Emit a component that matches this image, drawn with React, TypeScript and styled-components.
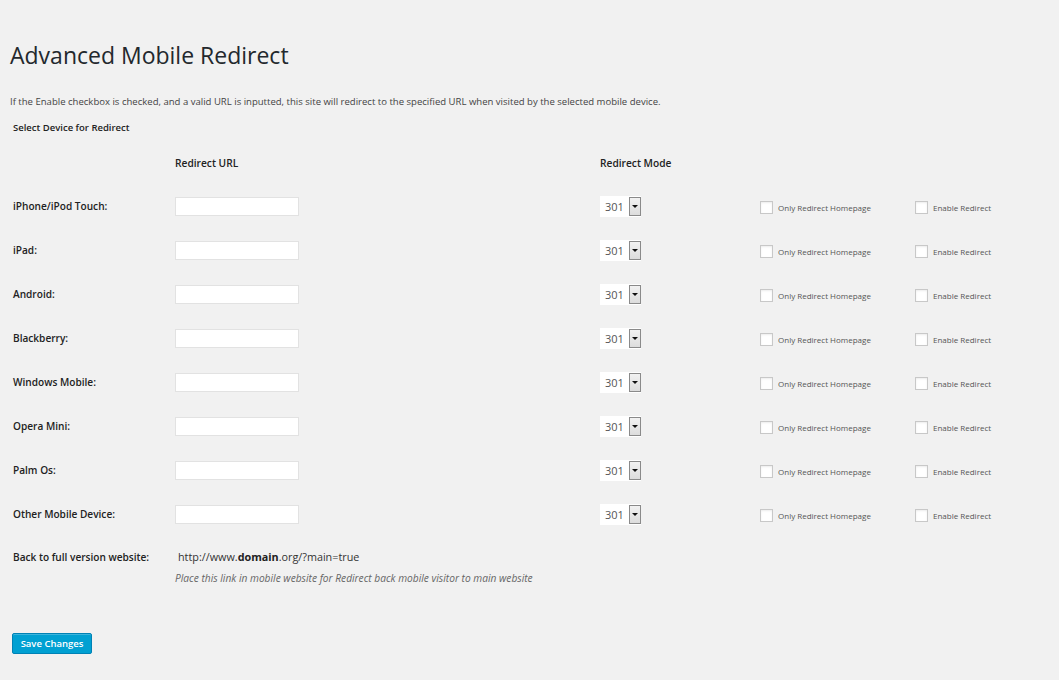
import React from "react";
import styled, { createGlobalStyle } from "styled-components";

const Global = createGlobalStyle`
  html, body { margin: 0; padding: 0; background: #f1f1f1; }
  body { font-family: "Open Sans", "Noto Sans", sans-serif; color: #444; }
`;

const Page = styled.div`
  width: 1059px;
  min-height: 680px;
  box-sizing: border-box;
  padding: 40px 10px 0 10px;
`;

const Title = styled.h1`
  margin: 0;
  font-size: 23px;
  font-weight: 400;
  line-height: 30px;
  color: #23282d;
`;

const Desc = styled.p`
  margin: 24px 0 0 0;
  font-size: 9.55px;
  line-height: 16px;
  color: #444;
`;

const Section = styled.div`
  margin: 10px 0 0 3px;
  font-size: 9.5px;
  font-weight: 600;
  line-height: 16px;
  color: #222;
`;

const Grid = styled.div`
  margin-top: 6px;
  margin-left: 3px;
  display: grid;
  grid-template-columns: 162px 425px 160px 155px auto;
  grid-template-rows: 42px;
  grid-auto-rows: 44px;
  align-items: center;
`;

const HeadCell = styled.div<{ $col: number }>`
  grid-column: ${(p) => p.$col};
  font-size: 10.2px;
  font-weight: 600;
  color: #222;
`;

const Label = styled.div`
  grid-column: 1;
  font-size: 10.1px;
  font-weight: 600;
  color: #222;
`;

const UrlInput = styled.input`
  display: block;
  width: 124px;
  height: 19px;
  box-sizing: border-box;
  margin: 0;
  border: 1px solid #e2e2e2;
  background: #fff;
  padding: 0;
`;

const Select = styled.div`
  display: flex;
  align-items: center;
  width: 41px;
  height: 21px;
  background: #fff;
  box-sizing: border-box;
`;

const SelectValue = styled.span`
  flex: 1;
  padding-left: 5px;
  font-size: 11px;
  color: #555;
`;

const SelectArrow = styled.span`
  width: 12px;
  height: 19px;
  box-sizing: border-box;
  border: 1px solid #8a8a8a;
  background: linear-gradient(#f2f2f2, #dcdcdc);
  display: flex;
  align-items: center;
  justify-content: center;
  &::after {
    content: "";
    border-left: 3px solid transparent;
    border-right: 3px solid transparent;
    border-top: 3px solid #111;
  }
`;

const Check = styled.label`
  display: flex;
  align-items: center;
  gap: 5px;
  padding-top: 2px;
  font-size: 8px;
  color: #555;
`;

const Box = styled.span`
  width: 13px;
  height: 13px;
  box-sizing: border-box;
  border: 1px solid #c8c8c8;
  background: #fff;
  box-shadow: inset 0 1px 2px rgba(0, 0, 0, 0.08);
`;

const BackRow = styled.div`
  margin: 13px 0 0 3px;
  display: grid;
  grid-template-columns: 162px auto;
  row-gap: 7px;
  align-items: center;
`;

const UrlText = styled.div`
  font-size: 10.8px;
  color: #333;
  padding-left: 3px;
  b { font-weight: 700; color: #222; }
`;

const Hint = styled.div`
  grid-column: 2;
  font-size: 10.2px;
  font-style: italic;
  color: #666;
`;

const SaveButton = styled.button`
  display: block;
  margin: 48px 0 0 2px;
  width: 80px;
  height: 21px;
  padding: 0;
  border: 1px solid #0082b5;
  border-radius: 2px;
  background: #00a0d2;
  box-shadow: inset 0 1px 0 rgba(120, 200, 230, 0.5);
  color: #fff;
  font-family: "Open Sans", "Noto Sans", sans-serif;
  font-size: 9.5px;
  font-weight: 600;
`;

const devices = [
  "iPhone/iPod Touch:",
  "iPad:",
  "Android:",
  "Blackberry:",
  "Windows Mobile:",
  "Opera Mini:",
  "Palm Os:",
  "Other Mobile Device:",
];

export default function App() {
  return (
    <Page>
      <Global />
      <Title>Advanced Mobile Redirect</Title>
      <Desc>
        If the Enable checkbox is checked, and a valid URL is inputted, this site will redirect to the specified URL when visited by the selected mobile device.
      </Desc>
      <Section>Select Device for Redirect</Section>
      <Grid>
        <HeadCell $col={2}>Redirect URL</HeadCell>
        <HeadCell $col={3}>Redirect Mode</HeadCell>
        {devices.map((d) => (
          <React.Fragment key={d}>
            <Label>{d}</Label>
            <div>
              <UrlInput type="text" />
            </div>
            <Select>
              <SelectValue>301</SelectValue>
              <SelectArrow />
            </Select>
            <Check>
              <Box />
              Only Redirect Homepage
            </Check>
            <Check>
              <Box />
              Enable Redirect
            </Check>
          </React.Fragment>
        ))}
      </Grid>
      <BackRow>
        <Label>Back to full version website:</Label>
        <UrlText>
          http://www.<b>domain</b>.org/?main=true
        </UrlText>
        <Hint>Place this link in mobile website for Redirect back mobile visitor to main website</Hint>
      </BackRow>
      <SaveButton>Save Changes</SaveButton>
    </Page>
  );
}
